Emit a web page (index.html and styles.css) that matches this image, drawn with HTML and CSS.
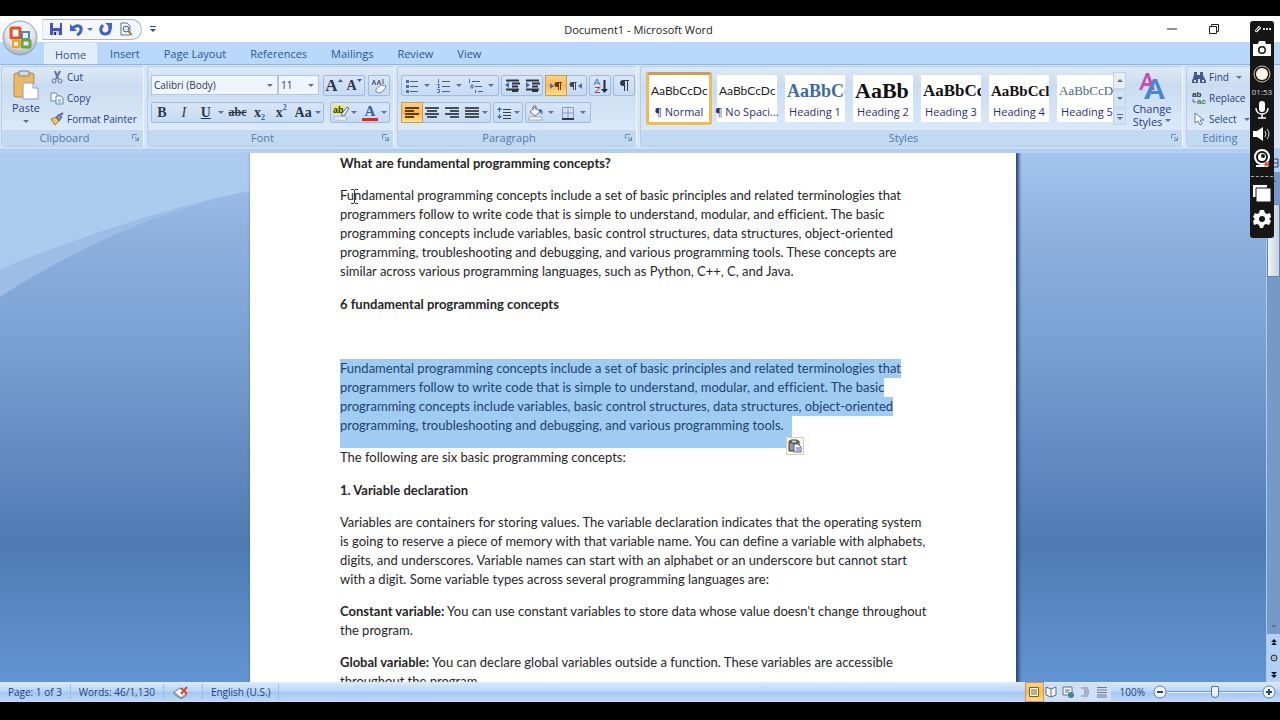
FILE: index.html
```
<!DOCTYPE html>
<html lang="en">
<head>
	<meta charset="utf-8">
	<title>Document1 - Microsoft Word</title>
	<link rel="stylesheet" href="styles.css">
</head>
<body>

	<header class="titlebar">
		<button class="office" aria-label="Office Button">
			<svg width="36" height="36" viewBox="0 0 36 36">
				<defs>
					<radialGradient id="orb" cx="50%" cy="35%" r="65%"><stop offset="0" stop-color="#fff"/><stop offset=".6" stop-color="#e4e8ee"/><stop offset="1" stop-color="#9fadc2"/></radialGradient>
				</defs>
				<circle cx="18" cy="18" r="17" fill="url(#orb)" stroke="#8fa0b8"/>
				<g fill="none">
					<rect x="9" y="8" width="9" height="10" rx="1" stroke="#d9541e" stroke-width="3"/>
					<path d="M20 12h7v7h-7z" stroke="#4a86c8" stroke-width="2"/>
					<path d="M11 21h6v6h-6z" stroke="#f0a41c" stroke-width="2"/>
					<rect x="20" y="20" width="8" height="7" rx="1" stroke="#6aa53a" stroke-width="3"/>
				</g>
			</svg>
		</button>
		<div class="quick">
			<button aria-label="Save"><svg width="14" height="14" viewBox="0 0 14 14"><path d="M1 1h12v12H1z" fill="#4157b4"/><path d="M4 1h7v5H4z" fill="#eef3ff"/><path d="M4 9h6v4H4z" fill="#c9d3ee"/><path d="M5 10h2v3H5z" fill="#26357f"/></svg></button>
			<button aria-label="Undo"><svg width="13" height="13" viewBox="0 0 13 13"><path d="M3 5C7 1 12 3 11 7c0 2-2 4-4 5" fill="none" stroke="#3e63c4" stroke-width="3"/><path d="M0 1v7h7z" fill="#3e63c4"/></svg></button>
			<i class="caret"></i>
			<button aria-label="Repeat"><svg width="13" height="13" viewBox="0 0 13 13"><path d="M4 2C0 6 2 11 6 11c5 0 6-5 4-8" fill="none" stroke="#3e63c4" stroke-width="3"/><path d="M6 0h7v6z" fill="#3e63c4"/></svg></button>
			<button aria-label="Print Preview"><svg width="14" height="14" viewBox="0 0 14 14"><path d="M2 1h6l3 3v9H2z" fill="#fff" stroke="#5c6f92"/><circle cx="7" cy="7" r="3" fill="#cfe4f8" stroke="#48648d"/><path d="M9 9l4 4" stroke="#b88428" stroke-width="2"/></svg></button>
		</div>
		<button class="quick-more" aria-label="Customize Quick Access Toolbar"><svg width="6" height="6" viewBox="0 0 6 6"><path d="M0 0h6v1H0zM0 3h6L3 6z" fill="#3b4a66"/></svg></button>
		<h1>Document1 - Microsoft Word</h1>
		<div class="window-buttons">
			<button aria-label="Minimize"><svg width="10" height="10" viewBox="0 0 10 10"><path d="M0 5h10" stroke="#222"/></svg></button>
			<button aria-label="Restore"><svg width="10" height="10" viewBox="0 0 10 10"><path d="M.5 2.500h7v7h-7zM2.500 2.500v-2h7v7h-2" fill="none" stroke="#222"/></svg></button>
		</div>
	</header>

	<nav class="tabs">
		<a href="#home" class="active">Home</a>
		<a href="#insert">Insert</a>
		<a href="#layout">Page Layout</a>
		<a href="#references">References</a>
		<a href="#mailings">Mailings</a>
		<a href="#review">Review</a>
		<a href="#view">View</a>
	</nav>

	<div class="ribbon">
		<section class="group clipboard">
			<div class="group-body">
				<button class="big">
					<svg width="26" height="30" viewBox="0 0 26 30"><rect x="1" y="3" width="20" height="24" rx="2" fill="#eab964" stroke="#b98a43"/><rect x="6" y="1" width="10" height="5" rx="1" fill="#d6d9df" stroke="#7c828d"/><path d="M10 13h10l5 5v11H10z" fill="#fff" stroke="#8b9ebd"/><path d="M20 13v5h5" fill="#dce6f5" stroke="#8b9ebd"/></svg>
					<span>Paste</span><i class="caret"></i>
				</button>
				<div class="stack">
					<button><svg width="14" height="14" viewBox="0 0 14 14" fill="none" stroke="#5f7396"><path d="M5 1l3 8M10 1L6 9" stroke-width="2"/><circle cx="4" cy="11" r="2"/><circle cx="10" cy="11" r="2"/></svg>Cut</button>
					<button><svg width="14" height="14" viewBox="0 0 14 14" fill="#f4f8ff" stroke="#6d86b5"><path d="M1 2h5l2 2v6H1z"/><path d="M6 5h5l2 2v6H6z"/><path d="M8 9h3M8 11h3"/></svg>Copy</button>
					<button><svg width="14" height="14" viewBox="0 0 14 14"><path d="M1 7l5-2 3 4-4 4z" fill="#efc654" stroke="#a5802b"/><path d="M6 5l3-3 3 3-3 4z" fill="#8193b5" stroke="#51648b"/><path d="M10 3l3-2" stroke="#51648b" stroke-width="2"/></svg>Format Painter</button>
				</div>
			</div>
			<h2 class="group-name">Clipboard<svg class="launch" width="7" height="7" viewBox="0 0 7 7"><path d="M.5 5V.5H5M3 3l3 3M6.500 3v3.500H3" fill="none" stroke="#6b87b5"/></svg></h2>
		</section>

		<section class="group font">
			<div class="group-body rows">
				<div class="row">
					<div class="combos">
						<label class="combo family"><select aria-label="Font"><option>Calibri (Body)</option></select></label>
						<label class="combo size"><select aria-label="Font Size"><option>11</option></select></label>
					</div>
					<div class="set push">
						<button class="serif grow" aria-label="Grow Font">A<svg width="5" height="4" viewBox="0 0 5 4"><path d="M0 3l2.500-3L5 3z" fill="#3c5a9a"/></svg></button>
						<button class="serif shrink" aria-label="Shrink Font">A<svg width="5" height="4" viewBox="0 0 5 4"><path d="M0 0h5L2.500 3z" fill="#3c5a9a"/></svg></button>
					</div>
					<div class="set">
						<button aria-label="Clear Formatting"><svg width="16" height="16" viewBox="0 0 16 16"><path d="M1 7l2-5 2 5M2 5h2M6 7l2-5 2 5M7 5h2M12 1v5" fill="none" stroke="#4a5878"/><path d="M5 11l5-4 5 1-1 3-5 4-4-1z" fill="#f7f8fb" stroke="#7d8aa5"/></svg></button>
					</div>
				</div>
				<div class="row">
					<div class="set styles-set">
						<button class="serif"><b>B</b></button>
						<button class="serif"><i>I</i></button>
						<button class="serif"><u>U</u></button>
						<i class="caret"></i>
						<button class="serif"><s>abc</s></button>
						<button class="serif sub">x<small>2</small></button>
						<button class="serif sup">x<small>2</small></button>
						<button class="serif">Aa</button><i class="caret"></i>
					</div>
					<div class="set push">
						<button aria-label="Text Highlight Color"><svg width="17" height="17" viewBox="0 0 17 17"><path d="M0 1h11v9H0z" fill="#f4ee43"/><text x="0" y="9" class="icon-text">ab</text><path d="M8 11l6-8 2 1-5 8z" fill="#f2f5fa" stroke="#55709c"/><path d="M1 13h13v3H1z" fill="#fff" stroke="#b0b9c8"/></svg></button><i class="caret"></i>
						<button class="serif font-color" aria-label="Font Color">A</button><i class="caret"></i>
					</div>
				</div>
			</div>
			<h2 class="group-name">Font<svg class="launch" width="7" height="7" viewBox="0 0 7 7"><path d="M.5 5V.5H5M3 3l3 3M6.500 3v3.500H3" fill="none" stroke="#6b87b5"/></svg></h2>
		</section>

		<section class="group paragraph">
			<div class="group-body rows">
				<div class="row">
					<div class="set wide">
						<button aria-label="Bullets"><svg width="14" height="14" viewBox="0 0 14 14"><path d="M5 2.500h8M5 7.500h8M5 12.500h8" stroke="#555e70"/><path d="M1 1h3v3H1zM1 6h3v3H1zM1 11h3v3H1z" fill="#4b6cae"/></svg></button><i class="caret"></i>
						<button aria-label="Numbering"><svg width="14" height="14" viewBox="0 0 14 14"><path d="M5 2.500h8M5 7.500h8M5 12.500h8" stroke="#555e70"/><path d="M1.500 0v4M0 5.500h2.500L1 8.500h2M0 10.500h2.500v3H0" fill="none" stroke="#4b6cae"/></svg></button><i class="caret"></i>
						<button aria-label="Multilevel List"><svg width="16" height="14" viewBox="0 0 16 14"><path d="M4 2.500h8M7 7.500h7M10 12.500h5" stroke="#555e70"/><path d="M1.500 0v4M3 6h2v3H3zM7.500 11v3" fill="none" stroke="#4b6cae"/></svg></button><i class="caret"></i>
					</div>
					<div class="set">
						<button aria-label="Decrease Indent"><svg width="15" height="13" viewBox="0 0 15 13"><path d="M1 1.500h13M7 4.500h8M7 7.500h6M1 10.500h13M7 12.500h6" stroke="#2c3342" stroke-width="2"/><path d="M0 6l4-3v6z" fill="#4267b6"/></svg></button>
						<button aria-label="Increase Indent"><svg width="15" height="13" viewBox="0 0 15 13"><path d="M1 1.500h13M7 4.500h8M7 7.500h6M1 10.500h13M7 12.500h6" stroke="#2c3342" stroke-width="2"/><path d="M5 6L1 3v6z" fill="#4267b6"/></svg></button>
					</div>
					<div class="set">
						<button class="on" aria-label="Left-to-Right"><svg width="14" height="12" viewBox="0 0 14 12"><path d="M1 3l4 3-4 3z" fill="#4a6bb0"/><path d="M13 2H8a2 2 0 000 5h1v3h1V3h1v7h1V3h1z" fill="#5a3c14"/></svg></button>
						<button aria-label="Right-to-Left"><svg width="14" height="12" viewBox="0 0 14 12"><path d="M13 3L9 6l4 3z" fill="#4a6bb0"/><path d="M7 2H3a2 2 0 000 5h1v3h1V3h1v7h1V3h1z" fill="#3c475e"/></svg></button>
					</div>
					<div class="set">
						<button aria-label="Sort"><svg width="15" height="16" viewBox="0 0 15 16"><path d="M1 7l3-6 3 6M2 5h4" fill="none" stroke="#4a6bb0"/><path d="M2 9.500h5l-5 5h5" fill="none" stroke="#a0414c"/><path d="M11.500 2v11" stroke="#222a3a" stroke-width="2"/><path d="M8 11h7l-3.500 4z" fill="#222a3a"/></svg></button>
					</div>
					<div class="set">
						<button aria-label="Show/Hide"><svg width="12" height="13" viewBox="0 0 12 13"><path d="M11 1H5a3 3 0 000 6h1v5h1V2h2v10h1V2h1z" fill="#30394b"/></svg></button>
					</div>
				</div>
				<div class="row">
					<div class="set">
						<button class="on" aria-label="Align Left"><svg width="14" height="11" viewBox="0 0 14 11"><path d="M0 1h14M0 4h9M0 7h14M0 10h9" stroke="#5d3d12" stroke-width="2"/></svg></button>
						<button aria-label="Center"><svg width="14" height="11" viewBox="0 0 14 11"><path d="M0 1h14M2 4h10M0 7h14M2 10h10" stroke="#454c5a" stroke-width="2"/></svg></button>
						<button aria-label="Align Right"><svg width="14" height="11" viewBox="0 0 14 11"><path d="M0 1h14M5 4h9M0 7h14M5 10h9" stroke="#454c5a" stroke-width="2"/></svg></button>
						<button aria-label="Justify"><svg width="14" height="11" viewBox="0 0 14 11"><path d="M0 1h14M0 4h14M0 7h14M0 10h14" stroke="#454c5a" stroke-width="2"/></svg></button><i class="caret"></i>
					</div>
					<div class="set">
						<button aria-label="Line Spacing"><svg width="15" height="14" viewBox="0 0 15 14"><path d="M6 3.500h8M6 6.500h8M6 9.500h8M6 12.500h8" stroke="#353c49"/><path d="M0 4l2.500-3L5 4zM0 10l2.500 3L5 10zM2 4h1v2H2zM2 8h1v2H2z" fill="#4267b6"/></svg></button><i class="caret"></i>
					</div>
					<div class="set wide">
						<button aria-label="Shading"><svg width="16" height="16" viewBox="0 0 16 16"><path d="M2 7l5-5 5 5-5 4z" fill="#f5f7fb" stroke="#6a7486"/><path d="M5 5V2a1 1 0 013 0v3" fill="none" stroke="#6a7486"/><path d="M11 4c4 0 4 3 3 6-1-2-1-3-3-3z" fill="#4d6fae"/><path d="M1 12h13v3H1z" fill="#fff" stroke="#a1abba"/></svg></button><i class="caret"></i>
						<button aria-label="Borders"><svg width="14" height="14" viewBox="0 0 14 14"><path d="M1.500 1v12M12.500 1v12M7 1v12M1 1.500h12M1 7h12" stroke="#8d9fbd"/><path d="M1 13h12" stroke="#2f3849" stroke-width="2"/></svg></button><i class="caret"></i>
					</div>
				</div>
			</div>
			<h2 class="group-name">Paragraph<svg class="launch" width="7" height="7" viewBox="0 0 7 7"><path d="M.5 5V.5H5M3 3l3 3M6.500 3v3.500H3" fill="none" stroke="#6b87b5"/></svg></h2>
		</section>

		<section class="group styles">
			<div class="group-body">
				<div class="gallery">
					<button class="swatch chosen"><span class="sample">AaBbCcDc</span><span>¶ Normal</span></button>
					<button class="swatch"><span class="sample">AaBbCcDc</span><span>¶ No Spaci...</span></button>
					<button class="swatch"><span class="sample h1">AaBbCc</span><span>Heading 1</span></button>
					<button class="swatch"><span class="sample h2">AaBb</span><span>Heading 2</span></button>
					<button class="swatch"><span class="sample h3">AaBbCc</span><span>Heading 3</span></button>
					<button class="swatch"><span class="sample h4">AaBbCcl</span><span>Heading 4</span></button>
					<button class="swatch"><span class="sample h5">AaBbCcD</span><span>Heading 5</span></button>
				</div>
				<div class="gallery-scroll">
					<button aria-label="Up" class="dim"><i class="caret up"></i></button>
					<button aria-label="Down"><i class="caret"></i></button>
					<button aria-label="More" class="more"><i class="caret"></i></button>
				</div>
				<button class="big change">
					<svg width="28" height="28" viewBox="0 0 28 28"><path d="M1 18L8 1h3l6 17h-4l-1-4H6l-2 4zM7 11h4L9 5z" fill="#c750ac"/><path d="M6 27l9-20h4l8 20h-5l-1-5h-8l-2 5zM14 19h6l-3-8z" fill="#4a86d6"/></svg>
					<span>Change</span><span class="with-caret">Styles<i class="caret"></i></span>
				</button>
			</div>
			<h2 class="group-name">Styles<svg class="launch" width="7" height="7" viewBox="0 0 7 7"><path d="M.5 5V.5H5M3 3l3 3M6.500 3v3.500H3" fill="none" stroke="#6b87b5"/></svg></h2>
		</section>

		<section class="group editing">
			<div class="group-body">
				<div class="stack">
					<button><svg width="14" height="14" viewBox="0 0 14 14" fill="#45598a"><path d="M2 2h3v3h3V2h3v3l3 6v2H8V9H6v4H0v-2l2-6z"/><path d="M2 10h2v2H2zM10 10h2v2h-2z" fill="#cfdcf2"/></svg>Find<i class="caret"></i></button>
					<button><svg width="14" height="14" viewBox="0 0 14 14"><text x="0" y="6" class="icon-text small">ab</text><text x="5" y="13" class="icon-text small green">ac</text><path d="M1 8v3h3" fill="none" stroke="#50658f"/></svg>Replace</button>
					<button><svg width="14" height="14" viewBox="0 0 14 14"><path d="M3 1v10l3-2 2 4 2-1-2-4h4z" fill="#fff" stroke="#66799c"/></svg>Select<i class="caret"></i></button>
				</div>
			</div>
			<h2 class="group-name">Editing</h2>
		</section>
	</div>

	<div class="workspace">
		<main class="desk">
			<svg class="wave" viewBox="0 0 250 150" preserveAspectRatio="none"><path d="M0 0h250v37Q120 65 0 144z" fill="#9dbde6"/><path d="M0 0h250v37Q140 59 0 116z" fill="#adcbee"/></svg>
			<article class="page">
				<h3>What are fundamental programming concepts?</h3>
				<p>Fundamental programming concepts include a set of basic principles and related terminologies that<br>
				programmers follow to write code that is simple to understand, modular, and efficient. The basic<br>
				programming concepts include variables, basic control structures, data structures, object-oriented<br>
				programming, troubleshooting and debugging, and various programming tools. These concepts are<br>
				similar across various programming languages, such as Python, C++, C, and Java.</p>
				<h3>6 fundamental programming concepts</h3>
				<p>&nbsp;</p>
				<p class="selected">
					<span>Fundamental programming concepts include a set of basic principles and related terminologies that</span>
					<span>programmers follow to write code that is simple to understand, modular, and efficient. The basic</span>
					<span>programming concepts include variables, basic control structures, data structures, object-oriented</span>
					<span class="last">programming, troubleshooting and debugging, and various programming tools.
						<button class="paste-options" aria-label="Paste Options"><svg width="14" height="14" viewBox="0 0 14 14"><path d="M1 2h10v10H1z" fill="#9a9a8e" stroke="#33353c"/><path d="M3 1h6v3H3z" fill="#e8e1b4" stroke="#33353c"/><path d="M6 5h4l3 3v5H6z" fill="#fff" stroke="#4c4fae"/><path d="M8 9h4M8 11h4" stroke="#4c4fae"/></svg></button>
					</span>
				</p>
				<p>The following are six basic programming concepts:</p>
				<h3>1. Variable declaration</h3>
				<p>Variables are containers for storing values. The variable declaration indicates that the operating system<br>
				is going to reserve a piece of memory with that variable name. You can define a variable with alphabets,<br>
				digits, and underscores. Variable names can start with an alphabet or an underscore but cannot start<br>
				with a digit. Some variable types across several programming languages are:</p>
				<p><b>Constant variable:</b> You can use constant variables to store data whose value doesn't change throughout<br>
				the program.</p>
				<p><b>Global variable:</b> You can declare global variables outside a function. These variables are accessible<br>
				throughout the program.</p>
				<svg class="ibeam" width="7" height="15" viewBox="0 0 7 15"><path d="M0 .5h3M4 .5h3M3.500 1v13M0 14.500h3M4 14.500h3" stroke="#333"/></svg>
			</article>
		</main>
		<aside class="scrollbar">
			<button class="ruler" aria-label="View Ruler"><svg width="10" height="10" viewBox="0 0 10 10"><path d="M1 1h8v8H1zM1 5h8" fill="none" stroke="#2f4266"/></svg></button>
			<div class="track">
				<button aria-label="Scroll up"><i class="caret up"></i></button>
				<div class="thumb"></div>
				<button class="down" aria-label="Scroll down"><i class="caret"></i></button>
			</div>
			<button aria-label="Previous Page"><svg width="6" height="7" viewBox="0 0 6 7"><path d="M3 0l3 3H0zM3 3l3 3H0z" fill="#101827"/></svg></button>
			<button aria-label="Select Browse Object"><svg width="8" height="8" viewBox="0 0 8 8"><circle cx="4" cy="4" r="3" fill="#a9b7cc" stroke="#27303f"/></svg></button>
			<button aria-label="Next Page"><svg width="6" height="7" viewBox="0 0 6 7"><path d="M0 1h6L3 4zM0 4h6L3 7z" fill="#101827"/></svg></button>
		</aside>
	</div>

	<footer class="status">
		<span class="cell">Page: 1 of 3</span>
		<span class="cell">Words: 46/1,130</span>
		<span class="cell"><svg width="16" height="14" viewBox="0 0 16 14"><path d="M1 7l6-4 7 5-6 5z" fill="#f5f7fb" stroke="#6f7f9b"/><path d="M1 7v2l7 5 6-4" fill="none" stroke="#6f7f9b"/><path d="M8 3l6 6M14 2L8 9" stroke="#dd4a30" stroke-width="2"/></svg></span>
		<span class="cell">English (U.S.)</span>
		<div class="views">
			<button class="on" aria-label="Print Layout"><svg width="12" height="12" viewBox="0 0 12 12"><path d="M1.500 1.500h9v9h-9z" fill="#fff8e0" stroke="#7b6332"/><path d="M3 4h6M3 6h6M3 8h6" stroke="#7b6332"/></svg></button>
			<button aria-label="Full Screen Reading"><svg width="12" height="12" viewBox="0 0 12 12"><path d="M1 1l5 2 5-2v8l-5 2-5-2zM6 3v8" fill="#f7f9fd" stroke="#5d6c88"/></svg></button>
			<button aria-label="Web Layout"><svg width="12" height="12" viewBox="0 0 12 12"><path d="M1 1h9v8H1z" fill="#f7f9fd" stroke="#5d6c88"/><path d="M3 4h5M3 6h4" stroke="#5d6c88"/><circle cx="9" cy="9" r="3" fill="#3f8a8e"/></svg></button>
			<button aria-label="Outline"><svg width="12" height="12" viewBox="0 0 12 12"><path d="M2 2h7M5 4h5M5 6h5M5 8h5M2 10h7" stroke="#77859e"/></svg></button>
			<button aria-label="Draft"><svg width="12" height="12" viewBox="0 0 12 12"><path d="M1 1.500h10M1 4h10M1 6.500h10M1 9h10M1 11h10" stroke="#6c7b96"/></svg></button>
		</div>
		<label for="zoom">100%</label>
		<button class="round" aria-label="Zoom Out"><svg width="14" height="14" viewBox="0 0 14 14"><circle cx="7" cy="7" r="6" fill="#eef3fa" stroke="#6d7f9d"/><path d="M4 7h6" stroke="#36445e" stroke-width="2"/></svg></button>
		<input type="range" id="zoom" min="0" max="100" value="50">
		<button class="round" aria-label="Zoom In"><svg width="14" height="14" viewBox="0 0 14 14"><circle cx="7" cy="7" r="6" fill="#eef3fa" stroke="#6d7f9d"/><path d="M4 7h6M7 4v6" stroke="#36445e" stroke-width="2"/></svg></button>
	</footer>

	<!-- floating screen recorder -->
	<div class="recorder">
		<svg width="18" height="8" viewBox="0 0 18 8"><path d="M2 6l4-5 2 2-4 4z" fill="#ddd" stroke="#ddd"/><path d="M3 6l4-4" stroke="#333"/><path d="M10 4h2M13 4h2M16 4h2" stroke="#ddd" stroke-width="2"/></svg>
		<button aria-label="Screenshot"><svg width="18" height="16" viewBox="0 0 18 16"><path d="M0 3h5l1-3h6l1 3h5v12H0z" fill="#fff"/><circle cx="9" cy="9" r="4" fill="#161616"/><circle cx="9" cy="9" r="2.500" fill="#fff"/></svg></button>
		<button aria-label="Record"><svg width="18" height="18" viewBox="0 0 18 18"><circle cx="9" cy="9" r="8" fill="#161616" stroke="#d9c4a4"/><circle cx="9" cy="9" r="6" fill="#fff8e8"/></svg></button>
		<span class="time">01:53</span>
		<button aria-label="Microphone"><svg width="14" height="18" viewBox="0 0 14 18"><rect x="4" y="0" width="6" height="11" rx="3" fill="#fff"/><path d="M1 7c0 8 12 8 12 0M7 13v4M3 17h8" fill="none" stroke="#fff" stroke-width="1.500"/></svg></button>
		<button aria-label="Sound"><svg width="18" height="14" viewBox="0 0 18 14"><path d="M0 4h4l6-4v14l-6-4H0z" fill="#fff"/><path d="M12 4q2 3 0 6M14 2q4 5 0 10" fill="none" stroke="#ddd"/></svg></button>
		<button aria-label="Webcam"><svg width="18" height="19" viewBox="0 0 18 19"><circle cx="9" cy="8" r="7" fill="#161616" stroke="#fff" stroke-width="2"/><circle cx="9" cy="8" r="4" fill="#fff"/><circle cx="10" cy="7" r="2" fill="#161616"/><path d="M3 17h12" stroke="#fff" stroke-width="2"/><path d="M12 13l4 4M16 13l-4 4" stroke="#e05b40" stroke-width="2"/></svg></button>
		<hr>
		<button aria-label="Windows"><svg width="18" height="17" viewBox="0 0 18 17"><path d="M0 0h14v12H0z" fill="#fff"/><path d="M3 3h15v14H3z" fill="#fff" stroke="#161616"/></svg></button>
		<button aria-label="Settings"><svg width="18" height="18" viewBox="0 0 18 18"><path d="M7 0h4l1 3 2 1 3-1 1 4-2 2 2 2-2 4-3-1-2 1-1 3H7l-1-3-2-1-3 1-1-4 2-2-2-2 2-4 2 1 2-1z" fill="#fff"/><circle cx="9" cy="9" r="3" fill="#161616"/></svg></button>
	</div>

</body>
</html>
```
FILE: styles.css
```
* {
	box-sizing: border-box;
}

body {
	display: flex;
	flex-direction: column;
	height: 100vh;
	margin: 0;
	padding: 16px 0 18px;
	background: #000;
	overflow: hidden;
	color: #1e3f7c;
	font-family: "Open Sans", "Noto Sans", sans-serif;
	font-size: 11px;
}

button {
	display: flex;
	align-items: center;
	justify-content: center;
	margin: 0;
	padding: 0;
	border: 0;
	background: none;
	color: inherit;
	font: inherit;
}

svg {
	display: block;
	flex: none;
}

.caret {
	flex: none;
	width: 0;
	height: 0;
	border: 3px solid transparent;
	border-top-color: #5d7299;
	border-bottom: 0;
}

.caret.up {
	border-top: 0;
	border-bottom: 3px solid #5d7299;
}

/* title bar */

.titlebar {
	position: relative;
	display: flex;
	align-items: center;
	flex: none;
	height: 26px;
	padding: 0 61px 0 42px;
	background: #fff;
}

.office {
	position: absolute;
	left: 2px;
	top: 4px;
	z-index: 2;
	border-radius: 50%;
}

.quick {
	display: flex;
	align-items: center;
	gap: 7px;
	height: 21px;
	padding: 0 8px 0 6px;
	border: 1px solid #a9b3c2;
	border-left-color: #dfe4ec;
	border-radius: 0 11px 11px 0;
	background: #f4f6fa;
}

.quick .caret {
	margin: 0 -1px 0 -3px;
}

.quick-more {
	margin-left: 8px;
}

h1 {
	flex: 1;
	margin: 0;
	padding-right: 46px;
	color: #222;
	font-size: 11px;
	font-weight: 400;
	text-align: center;
}

.window-buttons {
	display: flex;
	gap: 32px;
}

/* tabs */

.tabs {
	display: flex;
	align-items: flex-end;
	flex: none;
	height: 22px;
	padding-left: 44px;
	background: #b9d8fb;
	font-size: 11px;
}

.tabs a {
	height: 21px;
	padding: 0 12px;
	color: #2f5594;
	line-height: 22px;
	text-decoration: none;
}

.tabs a.active {
	margin-right: 1px;
	padding: 0 10px;
	border: 1px solid #e8f2fd;
	border-bottom: 0;
	border-radius: 3px 3px 0 0;
	background: #e2edfa;
}

/* ribbon */

.ribbon {
	display: flex;
	flex: none;
	gap: 3px;
	height: 89px;
	padding: 1px 26px 6px 1px;
	border-top: 1px solid #90b5e0;
	background: linear-gradient(#d8e6f6 0 83px, #b2cff1 84px);
}

.group {
	display: flex;
	flex-direction: column;
	flex: none;
	border: 1px solid #b6cee9;
	border-right-color: #eef6fe;
	border-radius: 3px;
	background: linear-gradient(#dce8f5 0, #cfdff1 16px, #c9dcf1 17px, #dceafa 65px);
}

.group-body {
	display: flex;
	flex: 1;
}

.group-name {
	position: relative;
	margin: 0;
	padding-right: 16px;
	background: #c1d9f1;
	color: #5478b0;
	font-size: 11px;
	font-weight: 400;
	line-height: 16px;
	text-align: center;
}

.launch {
	position: absolute;
	right: 4px;
	top: 4px;
}

.clipboard {
	width: 143px;
}

.big {
	flex-direction: column;
	justify-content: flex-start;
	width: 48px;
	padding-top: 3px;
	line-height: 16px;
}

.big .caret {
	margin-top: 4px;
}

.stack {
	display: flex;
	flex-direction: column;
	align-items: flex-start;
	gap: 5px;
	padding-top: 2px;
	font-size: 10px;
}

.stack button {
	gap: 3px;
	height: 16px;
	white-space: nowrap;
}

.stack .caret {
	margin-left: 4px;
}

.rows {
	flex-direction: column;
	gap: 6px;
	padding: 8px 3px 0;
}

.row {
	display: flex;
	gap: 3px;
}

.font {
	width: 247px;
}

.paragraph {
	width: 240px;
}

.combos {
	display: flex;
}

.combo {
	position: relative;
}

.combo::after {
	content: "";
	position: absolute;
	right: 5px;
	top: 9px;
	border: 3px solid transparent;
	border-top-color: #5d7299;
	border-bottom: 0;
}

.combo select {
	width: 100%;
	height: 20px;
	padding: 0 2px;
	border: 1px solid #b1c8e4;
	border-radius: 0;
	background: #eef5fc;
	color: #2b3a55;
	font: inherit;
	font-size: 10px;
	appearance: none;
}

.family {
	width: 127px;
}

.size {
	width: 41px;
}

.set {
	display: flex;
	align-items: center;
	height: 21px;
	border: 1px solid #9fbbdf;
	border-radius: 2px;
	background: linear-gradient(#d8e6f6, #c6daf2);
}

.push {
	margin-left: auto;
}

.set button {
	width: 20px;
	height: 19px;
}

.set .caret {
	margin-right: 2px;
}

.paragraph .row {
	gap: 2px;
}

.wide .caret {
	margin: 0 4px 0 2px;
}

.styles-set {
	width: 173px;
	justify-content: space-between;
}

.on {
	background: linear-gradient(#fbd28b, #ffb84b 50%, #ffe08f);
	outline: 1px solid #c79b52;
}

.serif {
	color: #2d374a;
	font-family: "Liberation Serif", serif;
	font-size: 14px;
	font-weight: 700;
}

.serif i {
	font-weight: 400;
}

.serif s {
	font-size: 12px;
}

.serif svg {
	align-self: flex-start;
	margin-top: 3px;
}

.serif small {
	color: #3c5a9a;
	font-size: 8px;
}

.sub small {
	align-self: flex-end;
}

.sup small {
	align-self: flex-start;
}

.grow {
	font-size: 17px;
}

.set .font-color {
	width: 16px;
	height: 17px;
	margin: 0 3px;
	border-bottom: 3px solid #e1251f;
	color: #375f9f;
	font-size: 15px;
}

.icon-text {
	fill: #222c3f;
	font-family: "Liberation Sans", sans-serif;
	font-size: 9px;
	font-weight: 700;
}

.icon-text.small {
	font-size: 8px;
}

.icon-text.green {
	fill: #3c8652;
}

.styles {
	flex: 1;
	min-width: 0;
}

.styles .group-body {
	padding: 5px 4px 0 5px;
}

.gallery {
	display: flex;
	flex: 1;
	gap: 2px;
	overflow: hidden;
}

.swatch {
	flex-direction: column;
	justify-content: flex-end;
	flex: none;
	width: 66px;
	height: 53px;
	padding-bottom: 2px;
	border: 3px solid transparent;
	background: #fff;
	background-clip: padding-box;
	color: #2b2f72;
	line-height: 16px;
	white-space: nowrap;
}

.swatch.chosen {
	border-color: #eebb55;
	border-top-color: #cf9d4f;
	border-radius: 3px;
}

.swatch .sample {
	width: 60px;
	padding-left: 2px;
	overflow: hidden;
	color: #222;
	font-family: Lato, sans-serif;
	font-size: 12px;
	line-height: 26px;
	text-align: left;
}

.swatch .h1,
.swatch .h2,
.swatch .h3,
.swatch .h4,
.swatch .h5 {
	color: #111;
	font-family: "Liberation Serif", serif;
	font-weight: 700;
}

.swatch .h1 {
	color: #3f6ba3;
	font-size: 18px;
}

.swatch .h2 {
	font-size: 22px;
}

.swatch .h3 {
	font-size: 17px;
}

.swatch .h4 {
	font-size: 15px;
}

.swatch .h5 {
	color: #4d6683;
	font-size: 13px;
	font-weight: 400;
}

.gallery-scroll {
	display: flex;
	flex-direction: column;
	gap: 1px;
	width: 13px;
}

.gallery-scroll button {
	height: 17px;
	border: 1px solid #bdd3ec;
	background: #d3e3f6;
}

.gallery-scroll .dim {
	background: #e9edf0;
}

.gallery-scroll .more {
	flex-direction: column;
	gap: 2px;
}

.gallery-scroll .more::before {
	content: "";
	width: 6px;
	height: 1px;
	background: #5d7299;
}

.change {
	width: 52px;
	padding-top: 0;
	line-height: 13px;
}

.change svg {
	margin-bottom: 2px;
}

.with-caret {
	display: flex;
	gap: 3px;
}

.editing {
	width: 68px;
}

.editing .group-name {
	padding-right: 0;
}

.editing .stack {
	padding-left: 5px;
}

/* document */

.workspace {
	display: flex;
	flex: 1;
	min-height: 0;
}

.desk {
	position: relative;
	flex: 1;
	overflow: hidden;
	background: linear-gradient(#a5c5f0, #8fb1e0 15%, #76a0d0 38%, #678fc5 53%, #4e7bb3 74%, #5787c0 85%, #6293d3);
}

.wave {
	position: absolute;
	left: 0;
	top: 0;
	width: 20%;
	height: 150px;
}

.page {
	position: relative;
	width: 766px;
	max-width: 100%;
	min-height: 100%;
	margin: 0 auto;
	padding: 0 90px;
	background: #fff;
	box-shadow: 2px 0 3px 1px #2c4a77;
	color: #262626;
	font-family: Lato, sans-serif;
	font-size: 13px;
	font-variant-ligatures: none;
	line-height: 19px;
	white-space: nowrap;
}

.page h3 {
	margin: 0 0 13px;
	font-size: 13px;
	line-height: 20px;
}

.page p {
	margin: 0 0 13px;
}

.page .selected {
	margin: 0;
	color: #1d4470;
}

.selected span {
	display: block;
	width: fit-content;
	background: #a0cbf2;
}

.selected .last {
	position: relative;
	padding: 0 8px 13px 0;
}

.paste-options {
	position: absolute;
	right: -12px;
	bottom: -7px;
	width: 18px;
	height: 18px;
	border: 1px solid #d8cfae;
	background: #fffdf2;
}

.ibeam {
	position: absolute;
	left: 101px;
	top: 36px;
}

.scrollbar {
	display: flex;
	flex-direction: column;
	width: 14px;
	border-left: 1px solid #a9caf5;
	background: #b4d0f2;
}

.scrollbar button {
	height: 16px;
}

.scrollbar .ruler {
	height: 19px;
}

.track {
	display: flex;
	flex-direction: column;
	flex: 1;
	background: #7699c8;
}

.thumb {
	height: 73px;
	margin-top: 16px;
	border: 1px solid #6b83a8;
	background: linear-gradient(90deg, #f1f4f9, #c4d0e2);
}

.down {
	margin-top: auto;
}

/* status bar */

.status {
	display: flex;
	align-items: center;
	flex: none;
	height: 20px;
	padding-right: 4px;
	background: linear-gradient(#dceafb, #b5d2f6 50%, #a4c6f1 51%, #c0daf9);
	font-size: 10px;
}

.cell {
	display: flex;
	align-items: center;
	height: 16px;
	padding: 0 8px;
	border-right: 1px solid #9dbde6;
}

.cell svg {
	margin: 0 5px 0 1px;
}

.views {
	display: flex;
	height: 18px;
	margin-left: auto;
	background: #d0e0f4;
}

.views button {
	width: 17px;
}

.status label {
	margin: 0 8px 0 9px;
}

#zoom {
	width: 95px;
	height: 14px;
	margin: 0;
	background: linear-gradient(transparent 6px, #7797c6 6px 7px, #e4effc 7px 8px, transparent 8px);
	appearance: none;
}

#zoom::-webkit-slider-thumb {
	width: 8px;
	height: 12px;
	border: 1px solid #566c90;
	border-radius: 1px 1px 4px 4px;
	background: #eef3fa;
	appearance: none;
}

/* recorder */

.recorder {
	position: absolute;
	right: 6px;
	top: 21px;
	z-index: 5;
	display: flex;
	flex-direction: column;
	align-items: center;
	gap: 8px;
	width: 24px;
	height: 217px;
	padding-top: 4px;
	border-radius: 3px;
	background: #161616;
	color: #ddd;
}

.time {
	margin: -4px 0;
	font-size: 8px;
	line-height: 10px;
}

.recorder hr {
	width: 22px;
	margin: 0;
	border: 0;
	border-top: 1px dashed #aaa;
}
```
